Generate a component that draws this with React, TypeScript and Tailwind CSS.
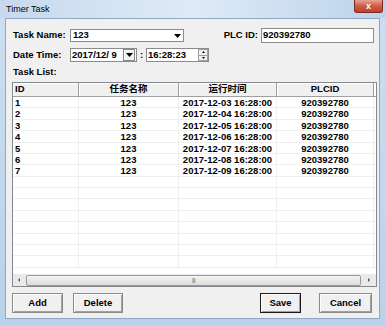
import { ReactNode } from "react";

const rows = [
  { id: "1", name: "123", time: "2017-12-03 16:28:00", plc: "920392780" },
  { id: "2", name: "123", time: "2017-12-04 16:28:00", plc: "920392780" },
  { id: "3", name: "123", time: "2017-12-05 16:28:00", plc: "920392780" },
  { id: "4", name: "123", time: "2017-12-06 16:28:00", plc: "920392780" },
  { id: "5", name: "123", time: "2017-12-07 16:28:00", plc: "920392780" },
  { id: "6", name: "123", time: "2017-12-08 16:28:00", plc: "920392780" },
  { id: "7", name: "123", time: "2017-12-09 16:28:00", plc: "920392780" },
];

const EMPTY_ROWS = 8;

function DownArrow() {
  return (
    <svg width="7" height="4" viewBox="0 0 7 4">
      <path d="M0 0h7L3.5 4z" fill="#000" />
    </svg>
  );
}

function Button({ children, w, isDefault }: { children: ReactNode; w: string; isDefault?: boolean }) {
  return (
    <div
      className={`${w} h-[20px] flex items-center justify-center bg-[#f0f0f0] border ${
        isDefault ? "border-[#1a1a1a]" : "border-[#8a8a8a]"
      } shadow-[inset_1px_1px_0_#ffffff,inset_-1px_-1px_0_#a0a0a0]`}
    >
      {children}
    </div>
  );
}

function HeaderCell({ children, w, left }: { children: ReactNode; w: string; left?: boolean }) {
  return (
    <div
      className={`${w} h-full flex items-center ${
        left ? "justify-start pl-[2px]" : "justify-center"
      } border-r border-[#a0a0a0] shadow-[inset_1px_1px_0_#ffffff]`}
    >
      {children}
    </div>
  );
}

export default function App() {
  return (
    <div
      className="w-[385px] h-[325px] relative overflow-hidden flex flex-col bg-linear-to-b from-[#cddff2] to-[#b9d1ea] text-black"
      style={{ fontFamily: '"Liberation Sans", "Noto Sans CJK SC", sans-serif' }}
    >
      {/* title bar */}
      <div className="h-[18px] shrink-0 flex items-center pl-[6px] bg-linear-to-r from-[#c7d9ee] via-[#dfeaf6] to-[#bcd3ec]">
        <span className="text-[9px] leading-none">Timer Task</span>
      </div>
      <div className="absolute top-0 right-[2px] w-[29px] h-[13px] rounded-b-[3px] border border-t-0 border-[#7a2a22] bg-linear-to-b from-[#e8a393] via-[#cf5a45] to-[#c0402b] flex items-center justify-center">
        <span className="text-white text-[9px] font-bold leading-none">x</span>
      </div>

      {/* client area */}
      <div className="flex-1 mx-[5px] mb-[6px] bg-[#f0f0f0] border border-[#8fa7c2] flex flex-col text-[9.5px] font-bold">
        {/* task name row */}
        <div className="flex items-center h-[15px] mt-[9px] pl-[7px] pr-[5px]">
          <div className="w-[57px]">Task Name:</div>
          <div className="w-[114px] h-[13px] bg-white border border-[#8c8c8c] flex items-center">
            <span className="flex-1 pl-[2px]">123</span>
            <div className="w-[11px] h-full flex items-center justify-center">
              <DownArrow />
            </div>
          </div>
          <div className="flex-1" />
          <div className="mr-[3px]">PLC ID:</div>
          <div className="w-[113px] h-[15px] bg-white border border-[#8c8c8c] flex items-center pl-[1px]">
            920392780
          </div>
        </div>

        {/* date time row */}
        <div className="flex items-center h-[14px] mt-[5px] pl-[7px]">
          <div className="w-[57px]">Date Time:</div>
          <div className="w-[67px] h-[14px] bg-white border border-[#8c8c8c] flex items-center">
            <span className="flex-1 pl-[1px] whitespace-pre">2017/12/ 9</span>
            <div className="w-[12px] h-[12px] mr-[1px] bg-[#f0f0f0] border border-[#8a8a8a] shadow-[inset_1px_1px_0_#ffffff] flex items-center justify-center">
              <DownArrow />
            </div>
          </div>
          <div className="w-[9px] text-center">:</div>
          <div className="w-[63px] h-[14px] bg-white border border-[#8c8c8c] flex items-center">
            <span className="flex-1 pl-[1px]">16:28:23</span>
            <div className="w-[10px] h-full flex flex-col">
              <div className="flex-1 bg-[#f0f0f0] border border-[#a0a0a0] flex items-center justify-center">
                <svg width="3" height="2" viewBox="0 0 3 2">
                  <path d="M0 2h3L1.5 0z" fill="#000" />
                </svg>
              </div>
              <div className="flex-1 bg-[#f0f0f0] border border-t-0 border-[#a0a0a0] flex items-center justify-center">
                <svg width="3" height="2" viewBox="0 0 3 2">
                  <path d="M0 0h3L1.5 2z" fill="#000" />
                </svg>
              </div>
            </div>
          </div>
        </div>

        {/* task list label */}
        <div className="h-[12px] leading-[12px] mt-[4px] pl-[7px]">Task List:</div>

        {/* table */}
        <div className="ml-[6px] mr-[2px] mt-[4px] h-[205px] border border-[#828790] bg-white flex flex-col">
          <div className="h-[14px] shrink-0 flex bg-[#f0f0f0] border-b border-[#a0a0a0]">
            <HeaderCell w="w-[66px]" left>ID</HeaderCell>
            <HeaderCell w="w-[100px]">任务名称</HeaderCell>
            <HeaderCell w="w-[98px]">运行时间</HeaderCell>
            <HeaderCell w="w-[97px]">PLCID</HeaderCell>
            <div className="flex-1 bg-white" />
          </div>
          <div className="flex-1 overflow-hidden">
            {rows.map((r) => (
              <div key={r.id} className="h-[11.375px] flex border-b border-[#efefef] leading-[11px]">
                <div className="w-[66px] pl-[2px] border-r border-[#efefef]">{r.id}</div>
                <div className="w-[100px] text-center border-r border-[#efefef]">{r.name}</div>
                <div className="w-[98px] text-center border-r border-[#efefef]">{r.time}</div>
                <div className="w-[97px] text-center border-r border-[#efefef]">{r.plc}</div>
              </div>
            ))}
            {Array.from({ length: EMPTY_ROWS }).map((_, i) => (
              <div key={i} className="h-[11.375px] flex border-b border-[#efefef]">
                <div className="w-[66px] border-r border-[#efefef]" />
                <div className="w-[100px] border-r border-[#efefef]" />
                <div className="w-[98px] border-r border-[#efefef]" />
                <div className="w-[97px] border-r border-[#efefef]" />
              </div>
            ))}
          </div>
          {/* horizontal scrollbar */}
          <div className="h-[12px] shrink-0 flex items-center bg-[#e9e9e9]">
            <div className="w-[12px] h-full flex items-center justify-center">
              <svg width="2" height="4" viewBox="0 0 2 4">
                <path d="M2 0v4L0 2z" fill="#555" />
              </svg>
            </div>
            <div className="flex-1 h-[11px] mx-[1px] rounded-[2px] border border-[#9a9a9a] bg-linear-to-b from-[#f4f4f4] to-[#dcdcdc] flex items-center justify-center">
              <span className="text-[6px] text-[#666] font-normal leading-none tracking-[-0.5px]">|||</span>
            </div>
            <div className="w-[14px] h-full flex items-center justify-center">
              <svg width="2" height="4" viewBox="0 0 2 4">
                <path d="M0 0v4l2-2z" fill="#555" />
              </svg>
            </div>
          </div>
        </div>

        {/* buttons */}
        <div className="flex items-center mt-[6px] pl-[6px] pr-[7px]">
          <Button w="w-[51px]">Add</Button>
          <div className="w-[10px]" />
          <Button w="w-[50px]">Delete</Button>
          <div className="flex-1" />
          <Button w="w-[41px]" isDefault>Save</Button>
          <div className="w-[18px]" />
          <Button w="w-[53px]">Cancel</Button>
        </div>
      </div>
    </div>
  );
}
